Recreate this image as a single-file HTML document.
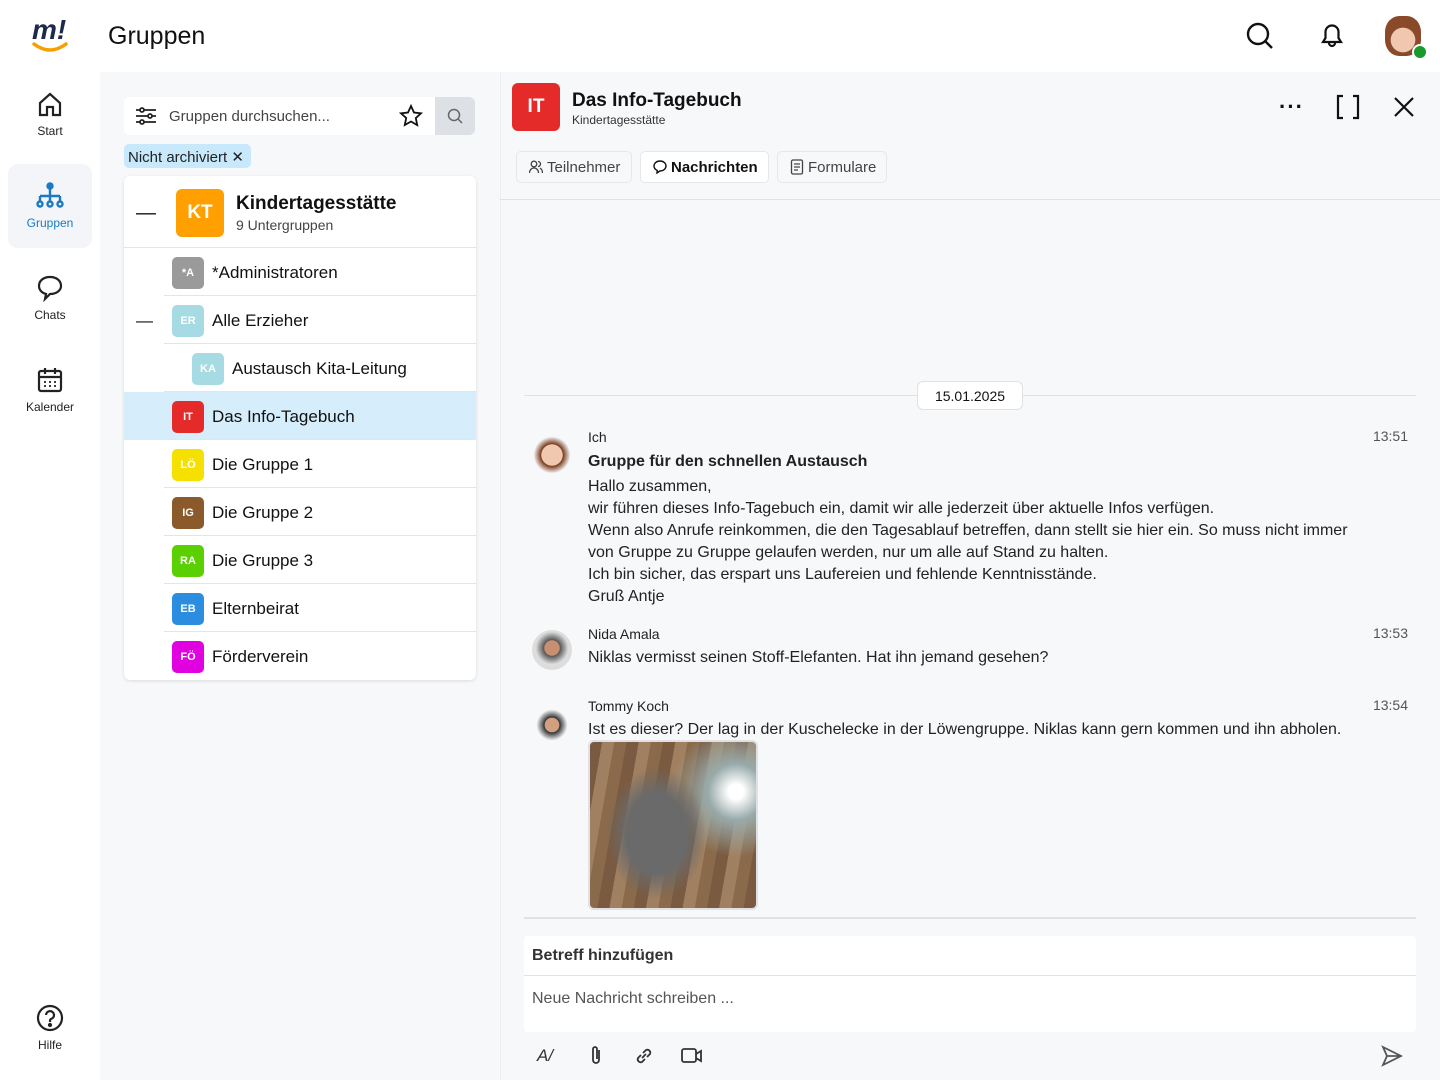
<!DOCTYPE html>
<html><head><meta charset="utf-8"><style>
*{box-sizing:border-box;margin:0;padding:0}
body{width:1440px;height:1080px;font-family:"Liberation Sans",sans-serif;background:#f7f8fa;position:relative;overflow:hidden;color:#111}
.abs{position:absolute}
.top{left:0;top:0;width:1440px;height:72px;background:#fff}
.nav{left:0;top:72px;width:100px;height:1008px;background:#fff}
.navi{position:absolute;left:8px;width:84px;height:84px;text-align:center;font-size:12px;color:#222}
.navi svg{display:block;margin:18px auto 6px}
.card{left:124px;top:176px;width:352px;height:504px;background:#fff;border-radius:6px;box-shadow:0 1px 3px rgba(0,0,0,.12)}
.row{position:absolute;left:0;width:352px;height:48px;font-size:17px;display:flex;align-items:center;padding-top:2px}
.row .sep{position:absolute;left:40px;right:0;bottom:0;border-bottom:1px solid #e3e5e8}
.av{width:32px;height:32px;border-radius:5px;color:#fff;font-size:11px;font-weight:bold;display:flex;align-items:center;justify-content:center;margin-right:8px}
.tab{position:absolute;top:151px;height:32px;border:1px solid #e5e7ea;border-radius:5px;font-size:15px;color:#444;display:flex;align-items:center;padding:0 8px 0 12px;gap:4px}
.msg{position:absolute;left:588px;font-size:16px;color:#222;line-height:22px}
.name{font-size:14px;color:#222}
.time{position:absolute;right:32px;font-size:14px;color:#555}
.face{position:absolute;left:532px;width:40px;height:40px;border-radius:50%;overflow:hidden}
</style></head><body>
<div class="abs top">
 <div class="abs" style="left:32px;top:14px;font:italic bold 28px 'Liberation Sans';color:#1d2a4d">m!</div>
 <svg class="abs" style="left:32px;top:40px" width="36" height="16"><path d="M2 4 Q18 16 34 4" stroke="#f5a000" stroke-width="3.5" fill="none" stroke-linecap="round"/></svg>
 <div class="abs" style="left:108px;top:22px;font-size:25px;color:#111">Gruppen</div>
 <svg class="abs" style="left:1245px;top:21px" width="30" height="30" fill="none" stroke="#111" stroke-width="2.4"><circle cx="13" cy="13" r="10"/><path d="M20.5 20.5L27 27"/></svg>
 <svg class="abs" style="left:1317px;top:20px" width="30" height="30" fill="none" stroke="#111" stroke-width="2.2"><path d="M6 22h18l-2.5-4v-6a6.5 6.5 0 0 0-13 0v6z M12 23a3 3 0 0 0 6 0"/></svg>
 <div class="abs" style="left:1385px;top:16px;width:36px;height:40px;border-radius:40%;background:radial-gradient(circle at 50% 60%,#f0c8b0 0 40%,#8a4a2a 42%)"></div>
 <div class="abs" style="left:1412px;top:44px;width:16px;height:16px;border-radius:50%;background:#1a9a2a;border:2px solid #fff"></div>
</div>
<div class="abs nav">
 <div class="navi" style="top:0"><svg width="28" height="28" fill="none" stroke="#222" stroke-width="2.2"><path d="M4 13L14 4l10 9v12h-7v-8h-6v8H4z"/></svg>Start</div>
 <div class="navi" style="top:92px;background:#f3f5f8;border-radius:10px;color:#1a7ac4;height:84px"><svg width="30" height="28" fill="none" stroke="#1a7ac4" stroke-width="2.4"><circle cx="15" cy="4" r="2.5" fill="#1a7ac4"/><path d="M15 6v8M5 14h20M5 14v6M15 14v6M25 14v6"/><circle cx="5" cy="22" r="2.5"/><circle cx="15" cy="22" r="2.5"/><circle cx="25" cy="22" r="2.5"/></svg>Gruppen</div>
 <div class="navi" style="top:184px"><svg width="28" height="28" fill="none" stroke="#222" stroke-width="2.2"><path d="M14 3C7 3 3 7 3 12c0 4 3 7 7 8l-1 5 5-5c7 0 11-4 11-8 0-5-4-9-11-9z"/></svg>Chats</div>
 <div class="navi" style="top:276px"><svg width="28" height="28" fill="none" stroke="#222" stroke-width="2.2"><rect x="3" y="5" width="22" height="20" rx="2"/><path d="M3 11h22M9 2v6M19 2v6"/><path d="M8 16h2M13 16h2M18 16h2M8 20h2M13 20h2M18 20h2" stroke-width="1.8"/></svg>Kalender</div>
 <div class="navi" style="top:914px"><svg width="28" height="28" fill="none" stroke="#222" stroke-width="2.2"><circle cx="14" cy="14" r="12"/><path d="M10 11a4 4 0 1 1 5 4c-1 .5-1 1-1 3"/><circle cx="14" cy="21" r="1" fill="#222"/></svg>Hilfe</div>
</div>
<div class="abs" style="left:124px;top:97px;width:351px;height:38px;background:#fff;border-radius:6px;overflow:hidden">
 <svg class="abs" style="left:11px;top:9px" width="22" height="20" fill="none" stroke="#222" stroke-width="1.8"><path d="M1 4h20M1 10h20M1 16h20"/><circle cx="7" cy="4" r="2" fill="#fff"/><circle cx="15" cy="10" r="2" fill="#fff"/><circle cx="7" cy="16" r="2" fill="#fff"/></svg>
 <div class="abs" style="left:45px;top:11px;font-size:15px;color:#444">Gruppen durchsuchen...</div>
 <svg class="abs" style="left:275px;top:7px" width="24" height="24" fill="none" stroke="#111" stroke-width="1.8"><path d="M12 2l3 6.5 7 .8-5.2 4.8 1.4 7L12 17.5 5.8 21l1.4-7L2 9.3l7-.8z"/></svg>
 <div class="abs" style="left:311px;top:0;width:40px;height:38px;background:#dde0e5"><svg class="abs" style="left:12px;top:11px" width="16" height="16" fill="none" stroke="#666" stroke-width="1.5"><circle cx="7" cy="7" r="5.5"/><path d="M11 11l4 4"/></svg></div>
</div>
<div class="abs" style="left:124px;top:144px;width:127px;height:24px;background:#c8e8fc;border-radius:5px;font-size:15px;color:#222;padding:4px 4px">Nicht archiviert ✕</div>
<div class="abs card">
 <div class="row" style="top:0;height:72px"><div style="width:52px;padding-left:12px;font-size:20px">—</div><div class="av" style="width:48px;height:48px;background:#ffa000;font-size:19px;border-radius:6px;margin-right:12px">KT</div><div><div style="font-weight:bold;font-size:19px">Kindertagesstätte</div><div style="font-size:14px;color:#444;margin-top:2px">9 Untergruppen</div></div><div class="sep" style="left:0"></div></div>
 <div class="row" style="top:72px;padding-left:48px"><div class="av" style="background:#9a9a9a">*A</div>*Administratoren<div class="sep"></div></div>
 <div class="row" style="top:120px;padding-left:12px"><div style="width:36px;font-size:17px">—</div><div class="av" style="background:#a6dbe4">ER</div>Alle Erzieher<div class="sep"></div></div>
 <div class="row" style="top:168px;padding-left:68px"><div class="av" style="background:#a6dbe4">KA</div>Austausch Kita-Leitung<div class="sep"></div></div>
 <div class="row" style="top:216px;padding-left:48px;background:#d6eefc"><div class="av" style="background:#e52a2a">IT</div>Das Info-Tagebuch<div class="sep"></div></div>
 <div class="row" style="top:264px;padding-left:48px"><div class="av" style="background:#f5e000">LÖ</div>Die Gruppe 1<div class="sep"></div></div>
 <div class="row" style="top:312px;padding-left:48px"><div class="av" style="background:#8b5a2b">IG</div>Die Gruppe 2<div class="sep"></div></div>
 <div class="row" style="top:360px;padding-left:48px"><div class="av" style="background:#5ad000">RA</div>Die Gruppe 3<div class="sep"></div></div>
 <div class="row" style="top:408px;padding-left:48px"><div class="av" style="background:#2a8de0">EB</div>Elternbeirat<div class="sep"></div></div>
 <div class="row" style="top:456px;padding-left:48px"><div class="av" style="background:#e000e0">FÖ</div>Förderverein</div>
</div>
<div class="abs" style="left:500px;top:72px;width:940px;height:1008px;background:#f7f8fa;border-left:1px solid #eceef1"></div>
<div class="abs" style="left:512px;top:83px;width:48px;height:48px;background:#e52a2a;border-radius:6px;color:#fff;font-weight:bold;font-size:19px;display:flex;align-items:center;justify-content:center">IT</div>
<div class="abs" style="left:572px;top:90px;font-size:19px;font-weight:bold">Das Info-Tagebuch</div>
<div class="abs" style="left:572px;top:113px;font-size:12px;color:#333">Kindertagesstätte</div>
<div class="abs" style="left:1279px;top:94px;font-size:22px;font-weight:bold;letter-spacing:1px">···</div>
<svg class="abs" style="left:1335px;top:94px" width="26" height="26" fill="none" stroke="#111" stroke-width="2.2"><path d="M8 2H3v22h5M18 2h5v22h-5"/></svg>
<svg class="abs" style="left:1393px;top:96px" width="22" height="22" stroke="#111" stroke-width="2.2"><path d="M2 2l18 18M20 2L2 20"/></svg>
<div class="tab" style="left:516px;width:116px"><svg width="14" height="14" fill="none" stroke="#444" stroke-width="1.3"><circle cx="5" cy="4" r="2.8"/><path d="M0.5 13c0-3 2-5 4.5-5s4.5 2 4.5 5M9 1.5a2.5 2.5 0 0 1 0 5M11 8c1.5 1 2.5 3 2.5 5"/></svg>Teilnehmer</div>
<div class="tab" style="left:640px;width:129px;background:#fff;color:#111;font-weight:bold"><svg width="14" height="14" fill="none" stroke="#111" stroke-width="1.4"><path d="M7 1C3.5 1 1 3.3 1 6c0 2 1.3 3.6 3.2 4.4L4 13l2.8-2H7c3.5 0 6-2.3 6-5S10.5 1 7 1z"/></svg>Nachrichten</div>
<div class="tab" style="left:777px;width:110px"><svg width="14" height="16" fill="none" stroke="#444" stroke-width="1.3"><rect x="1.5" y="1" width="11" height="14" rx="1.5"/><path d="M4 5h6M4 8h6M4 11h4"/></svg>Formulare</div>
<div class="abs" style="left:500px;top:199px;width:940px;border-top:1px solid #e0e2e6"></div>
<div class="abs" style="left:524px;top:395px;width:892px;border-top:1px solid #e0e2e6"></div>
<div class="abs" style="left:917px;top:381px;width:106px;height:29px;background:#fff;border:1px solid #dfe1e5;border-radius:6px;font-size:14px;text-align:center;line-height:28px">15.01.2025</div>
<div class="face" style="top:433px;background:radial-gradient(circle at 50% 55%,#f0c8b0 0 35%,#7a3a1a 37%,#f7f8fa 62%)"></div>
<div class="msg" style="top:426px"><div class="name">Ich</div><div style="font-weight:bold;font-size:16px;margin-top:3px">Gruppe für den schnellen Austausch</div><div style="margin-top:3px">Hallo zusammen,<br>wir führen dieses Info-Tagebuch ein, damit wir alle jederzeit über aktuelle Infos verfügen.<br>Wenn also Anrufe reinkommen, die den Tagesablauf betreffen, dann stellt sie hier ein. So muss nicht immer<br>von Gruppe zu Gruppe gelaufen werden, nur um alle auf Stand zu halten.<br>Ich bin sicher, das erspart uns Laufereien und fehlende Kenntnisstände.<br>Gruß Antje</div></div>
<div class="time" style="top:428px">13:51</div>
<div class="face" style="top:630px;background:radial-gradient(circle at 50% 45%,#c89070 0 25%,#555 27%,#ddd 55%)"></div>
<div class="msg" style="top:623px"><div class="name">Nida Amala</div><div style="margin-top:2px">Niklas vermisst seinen Stoff-Elefanten. Hat ihn jemand gesehen?</div></div>
<div class="time" style="top:625px">13:53</div>
<div class="face" style="top:705px;background:radial-gradient(circle at 50% 50%,#d0a080 0 25%,#333 27%,#f7f8fa 55%)"></div>
<div class="msg" style="top:695px"><div class="name">Tommy Koch</div><div style="margin-top:2px">Ist es dieser? Der lag in der Kuschelecke in der Löwengruppe. Niklas kann gern kommen und ihn abholen.</div></div>
<div class="time" style="top:697px">13:54</div>
<div class="abs" style="left:588px;top:740px;width:170px;height:170px;border-radius:6px;border:2px solid #dfe1e5;background:radial-gradient(ellipse 30% 40% at 40% 55%,#6a6a6a 0 60%,transparent 100%),radial-gradient(circle at 88% 30%,#fff 0 4%,#9aa 15%,transparent 35%),repeating-linear-gradient(100deg,#7a5a40 0 12px,#a08060 12px 24px,#8a6a4a 24px 36px)"></div>
<div class="abs" style="left:524px;top:917px;width:892px;border-top:2px solid #dfe1e5"></div>
<div class="abs" style="left:524px;top:936px;width:892px;height:96px;background:#fff;border-radius:4px">
 <div style="height:40px;border-bottom:1px solid #e0e2e6;padding:11px 8px;font-size:16px;font-weight:bold;color:#333">Betreff hinzufügen</div>
 <div style="padding:14px 8px;font-size:16px;color:#555">Neue Nachricht schreiben ...</div>
</div>
<div class="abs" style="left:537px;top:1046px;font-size:17px;color:#333;font-style:italic">A/</div>
<svg class="abs" style="left:588px;top:1044px" width="16" height="22" fill="none" stroke="#333" stroke-width="1.8"><path d="M11 6v10a3 3 0 0 1-6 0V5a2 2 0 0 1 4 0v10"/></svg>
<svg class="abs" style="left:633px;top:1045px" width="22" height="22" fill="none" stroke="#333" stroke-width="1.8"><path d="M9 13l4-4M8 10l-3 3a3 3 0 0 0 4 4l3-3M14 12l3-3a3 3 0 0 0-4-4l-3 3"/></svg>
<svg class="abs" style="left:680px;top:1046px" width="24" height="20" fill="none" stroke="#333" stroke-width="1.8"><rect x="2" y="3" width="14" height="13" rx="2"/><path d="M16 8l5-3v10l-5-3"/></svg>
<svg class="abs" style="left:1381px;top:1045px" width="22" height="22" fill="none" stroke="#555" stroke-width="1.8"><path d="M2 2l18 9-18 9 4-9z M6 11h14"/></svg>
</body></html>
